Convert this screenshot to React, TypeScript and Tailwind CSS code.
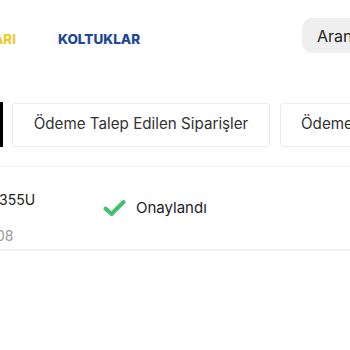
import React from 'react';

const CheckIcon = () => (
  <svg width="23" height="18" viewBox="0 0 23 18" fill="none">
    <path d="M2.5 9.5 L8.5 15 L20.5 3" stroke="#3ec26a" strokeWidth="4" strokeLinecap="round" strokeLinejoin="round" />
  </svg>
);

export default function App() {
  return (
    <div className="w-[350px] h-[350px] overflow-hidden bg-white font-['Inter',sans-serif] text-[#2b2b2b]">
      {/* Header */}
      <div className="flex items-start h-[72px]">
        <div className="shrink-0 w-[16px] mt-[29px] flex justify-end overflow-hidden">
          <span className="text-[13.5px] font-bold text-[#f2c51c] whitespace-nowrap">KAMPANYALARI</span>
        </div>
        <span className="shrink-0 mt-[29px] ml-[42px] text-[13.5px] font-extrabold text-[#1d479a]">
          KOLTUKLAR
        </span>
        <div className="shrink-0 ml-auto mt-[18px] w-[48px] h-[35px] bg-[#efefef] rounded-l-[10px] pl-[15px] flex items-center overflow-hidden whitespace-nowrap">
          <span className="text-[16px] text-[#222]">Aran</span>
        </div>
      </div>

      {/* Tabs */}
      <div className="mt-[30px] flex items-center whitespace-nowrap">
        <div className="shrink-0 w-[3px] h-[45px] bg-black" />
        <div className="shrink-0 ml-[9px] w-[258px] h-[44px] border border-[#ececec] rounded-[3px] flex items-center justify-center text-[15.2px] text-[#333]">
          Ödeme Talep Edilen Siparişler
        </div>
        <div className="shrink-0 ml-[10px] w-[200px] h-[44px] border border-[#ececec] rounded-[3px] flex items-center pl-[20px] text-[15.2px] text-[#333]">
          Ödeme
        </div>
      </div>

      <div className="mt-[19px] border-b border-[#f0f0f0]" />

      {/* Row */}
      <div className="flex h-[84px] border-b-2 border-[#f3f3f3]">
        <div className="flex flex-col w-[103px] pt-[22px]">
          <span className="text-[14px] text-[#222] -ml-[1px]">355U</span>
          <span className="mt-[15px] text-[14px] text-[#999] -ml-[4px]">08</span>
        </div>
        <div className="flex items-center gap-[10px] pt-[6px] h-[76px]">
          <CheckIcon />
          <span className="text-[15px] text-[#222]">Onaylandı</span>
        </div>
      </div>
    </div>
  );
}
